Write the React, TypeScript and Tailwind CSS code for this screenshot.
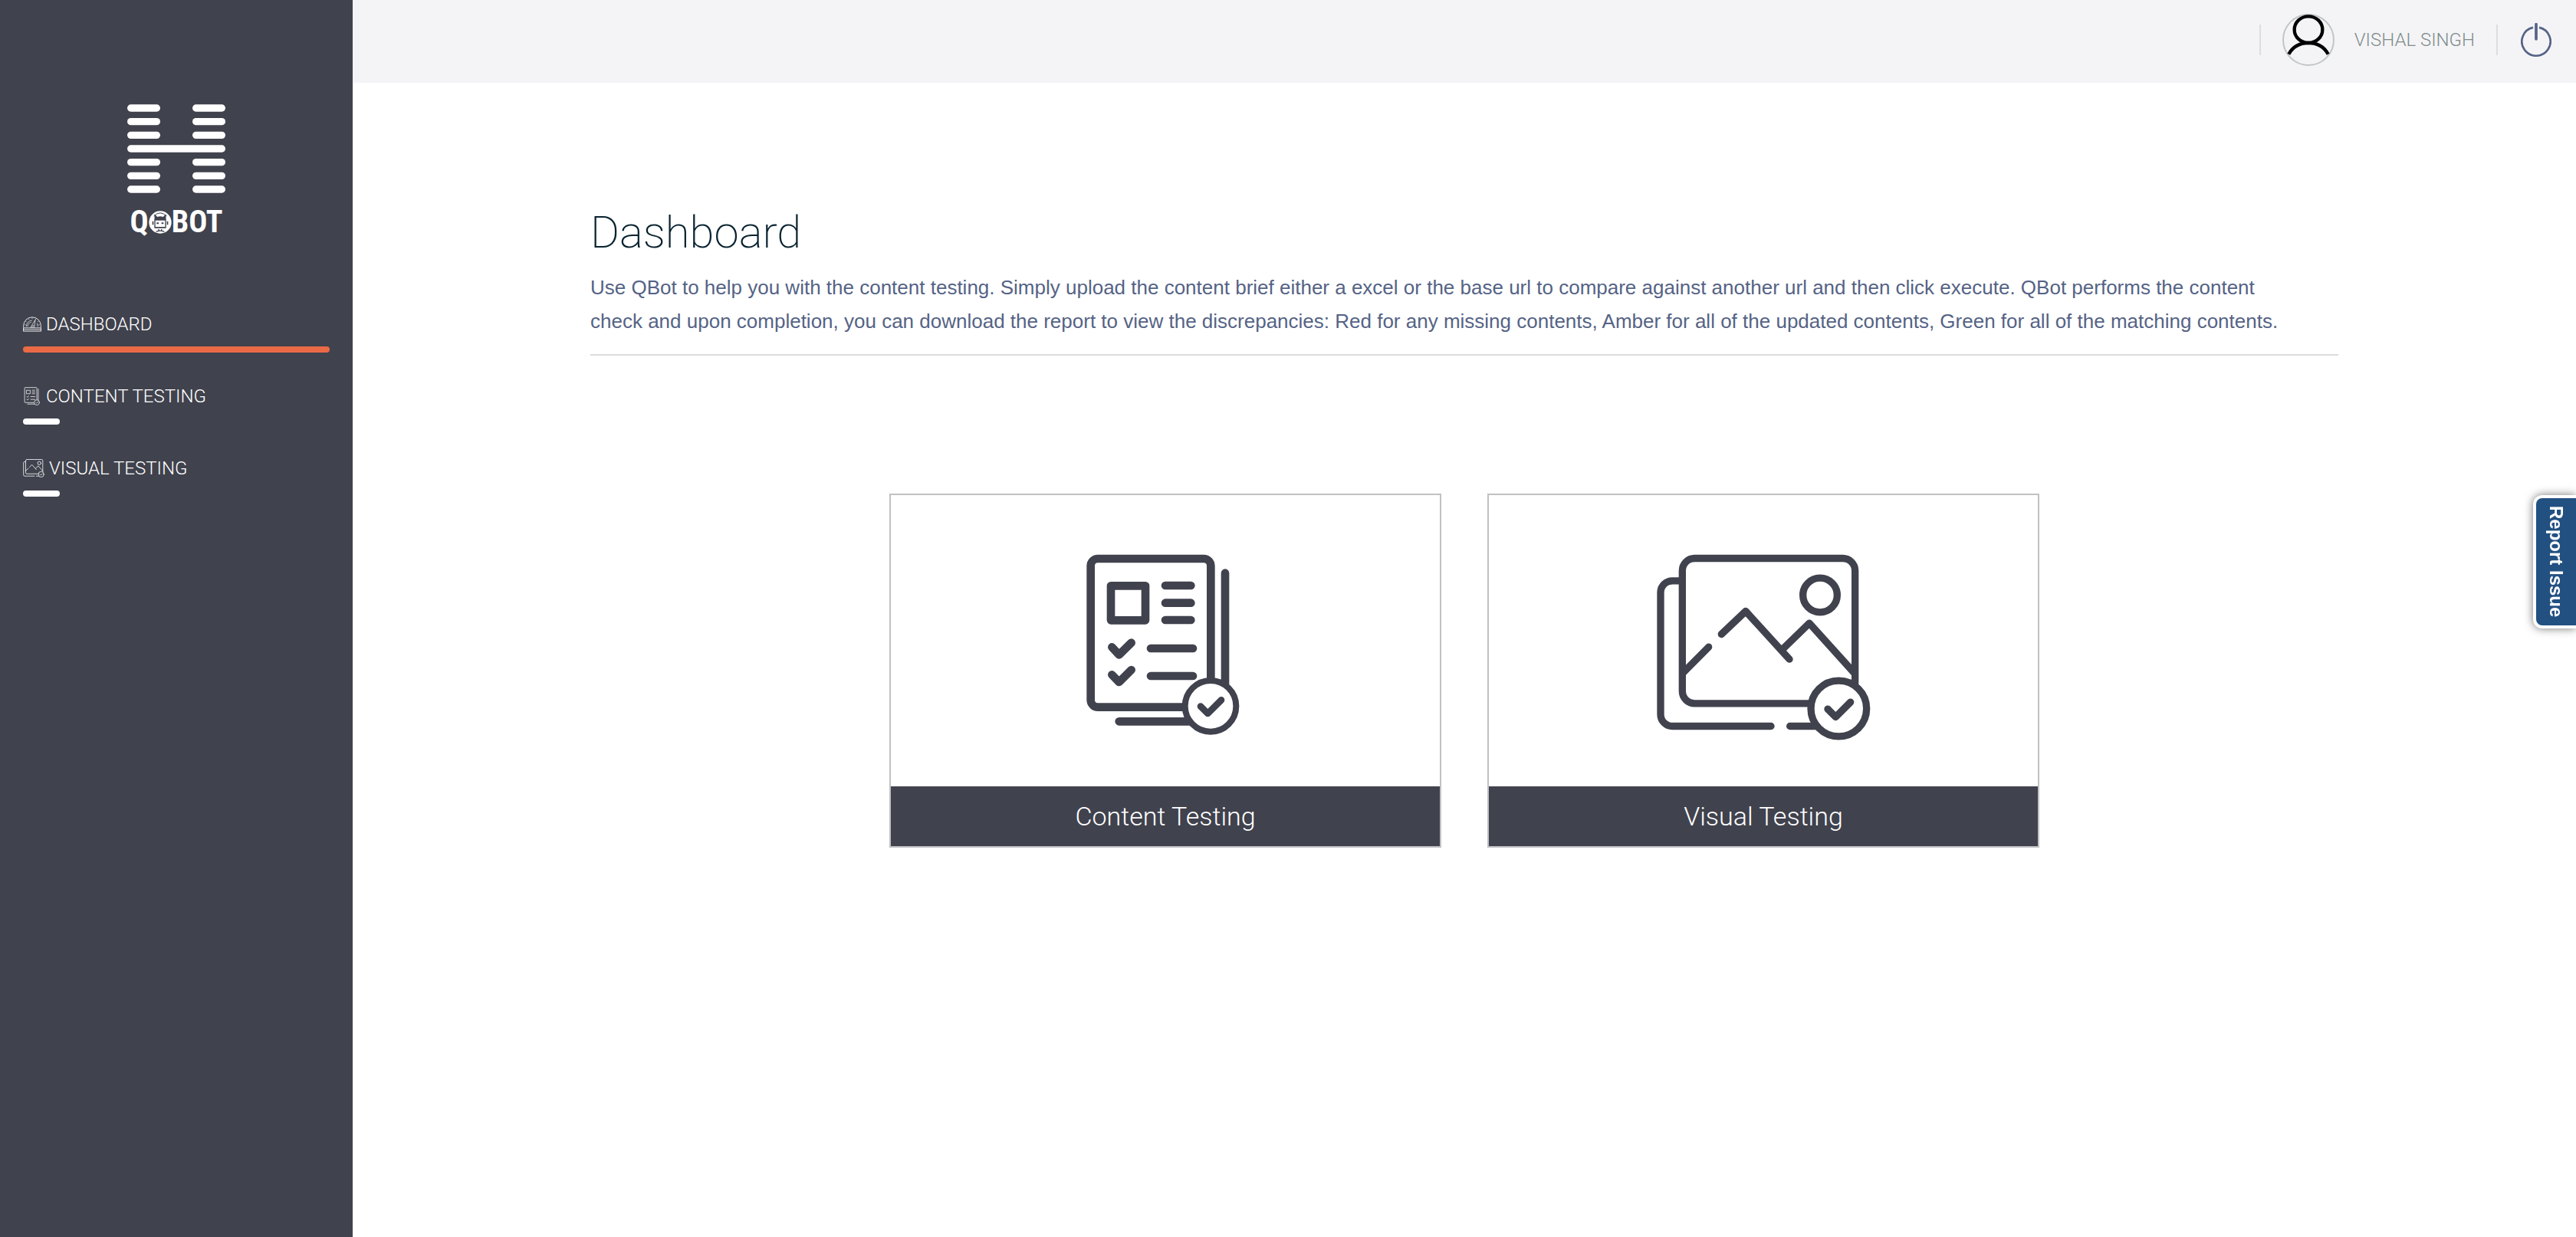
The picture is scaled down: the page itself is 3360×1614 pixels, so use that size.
import React from "react";

const INK = "#40424d";

function ContentIcon({ className, thin = false }: { className: string; thin?: boolean }) {
  const w = thin ? 22 : 32;
  return (
    <svg className={className} viewBox="112 98 618 708" fill="none" stroke="currentColor" strokeLinecap="round" strokeLinejoin="round" strokeWidth={w} aria-hidden="true">
      <path d="M490 697H157a28 28 0 0 1-28-28V144a28 28 0 0 1 28-28h414a28 28 0 0 1 28 28v440" />
      <path d="M655 172V620M240 753H530" />
      <path d="M208 222h135v135H208z" />
      <path d="M421 221h100M421 289h100M421 356h100M364 467h165M364 575h165" />
      <path d="M212 462l28 30 48-47M212 570l28 29 48-48" />
      <circle cx="598" cy="693" r="100" strokeWidth={thin ? 20 : 24} fill={thin ? INK : "#fff"} />
      <path d="M559 694l28 28 53-53" strokeWidth={thin ? 20 : 26} />
    </svg>
  );
}

function VisualIcon({ className, thin = false }: { className: string; thin?: boolean }) {
  return (
    <svg className={className} viewBox="92 98 837 728" fill="none" stroke="currentColor" strokeLinecap="round" strokeLinejoin="round" strokeWidth={thin ? 24 : 28} aria-hidden="true">
      <path d="M190 202H153a46 46 0 0 0-46 46V725a46 46 0 0 0 46 46H539M613 771H720" />
      <path d="M690 682H240a48 48 0 0 1-48-48V162a48 48 0 0 1 48-48H820a48 48 0 0 1 48 48V610" />
      <circle cx="731" cy="258" r="67" />
      <path d="M345 411L440 321 611 509M585 469L689 368 866 564M196 561L295 461" />
      <circle cx="804" cy="702" r="109" fill={thin ? INK : "#fff"} />
      <path d="M761 704l31 31 58-58" />
    </svg>
  );
}

function GaugeIcon({ className }: { className: string }) {
  return (
    <svg className={className} viewBox="90 65 72 59" fill="none" stroke="currentColor" strokeWidth="2.500" strokeLinejoin="round" aria-hidden="true">
      <path d="M92 108V101a34 34 0 0 1 68 0V108" />
      <path d="M91.500 109h69v13h-69zM92 115.500h68" />
      <path d="M103 104a23 23 0 0 1 22-24M108 104a18 18 0 0 1 14-17" strokeWidth="2" />
      <path d="M120 106L138 77 134 106zM126 100h8" strokeWidth="2" />
      <path d="M126 69v5M112 73l2 4M101 83l3 3M97 97h4M141 72l-2 4M151 83l-4 3M155 97h-5M145 91l3 13" strokeWidth="2" />
    </svg>
  );
}

function Logo() {
  const rows = [0, 1, 2, 3, 4, 5, 6];
  return (
    <a href="#home" className="flex flex-col items-center text-white" aria-label="QBot home">
      <svg className="h-[116px] w-32" viewBox="78 48 384 348" fill="#fff" aria-hidden="true">
        {rows.map((r) =>
          r === 3 ? (
            <rect key={r} x="78" y="208" width="384" height="28" rx="14" />
          ) : (
            <g key={r}>
              <rect x="78" y={49 + r * 53} width="129" height="28" rx="14" />
              <rect x="333" y={49 + r * 53} width="129" height="28" rx="14" />
            </g>
          ),
        )}
      </svg>
      <span className="mt-[18px] flex h-10 items-center font-['Roboto_Condensed','Liberation_Sans_Narrow',sans-serif] text-[40px] leading-10 font-bold">
        Q
        <svg className="h-[30px] w-[30px]" viewBox="161 461 90 90" aria-hidden="true">
          <circle cx="206" cy="506" r="44" fill="#fff" />
          <path d="M184 492l-1-18 12 11q11-5 22 0l12-11-1 18z" fill={INK} />
          <path d="M183 491h46v38h-46zM175 502h5v14h-5zM232 502h5v14h-5z" fill={INK} />
          <path d="M187 499h38v25h-38z" fill="#fff" />
          <path d="M192 507h8v6h-8zM211 507h8v6h-8z" fill={INK} />
          <path d="M190 543q16-7 32 0M200 533v6M211 533v6" stroke={INK} strokeWidth="4" fill="none" />
          <path d="M181 482q25-25 50 0" stroke={INK} strokeWidth="3" fill="none" />
        </svg>
        BOT
      </span>
    </a>
  );
}

function NavItem({ label, icon, active = false }: { label: string; icon: React.ReactNode; active?: boolean }) {
  return (
    <li>
      <a href="#nav" aria-current={active ? "page" : undefined} className="block text-white">
        <span className="flex h-[30px] items-center gap-1.5 text-2xl font-light whitespace-nowrap">
          {icon}
          {label}
        </span>
        <span className={active ? "mt-[14px] block h-2 w-full rounded-full bg-[#eb6a46]" : "mt-[14px] block h-2 w-12 rounded-full bg-white"} />
      </a>
    </li>
  );
}

function Card({ label, icon }: { label: string; icon: React.ReactNode }) {
  return (
    <a href="#open" className="flex max-w-[720px] flex-1 flex-col border-2 border-[#c0c1c3] text-[#40424d]">
      <span className="flex h-[380px] justify-center pt-[77px]">{icon}</span>
      <span className="flex h-[78px] items-center justify-center bg-[#40424d] text-[34px] font-light text-white">{label}</span>
    </a>
  );
}

export default function App() {
  return (
    <div className="flex min-h-screen bg-white font-[Roboto,sans-serif]">
      <aside className="w-[460px] shrink-0 bg-[#40424d] px-[30px] pt-[136px]">
        <Logo />
        <nav className="mt-[98px]">
          <ul className="flex flex-col gap-[42px]">
            <NavItem active label="DASHBOARD" icon={<GaugeIcon className="h-5 w-6" />} />
            <NavItem label="CONTENT TESTING" icon={<ContentIcon thin className="h-6 w-6" />} />
            <NavItem label="VISUAL TESTING" icon={<VisualIcon thin className="h-6 w-7" />} />
          </ul>
        </nav>
      </aside>

      <div className="flex min-w-0 flex-1 flex-col">
        <header className="flex h-[108px] items-center justify-end bg-[#f4f4f7] pr-8 pb-1">
          <div className="flex h-10 items-center border-x-2 border-[#dcdde0] px-7">
            <svg className="h-[68px] w-[68px]" viewBox="180 60 204 204" fill="none" aria-hidden="true">
              <circle cx="282" cy="162" r="99" stroke="#c0c5c5" strokeWidth="6" />
              <ellipse cx="282" cy="122" rx="55" ry="52" stroke="#000" strokeWidth="13" />
              <path d="M205 218q24-44 77-44t77 44" stroke="#000" strokeWidth="13" />
            </svg>
            <span className="ml-[26px] text-2xl font-light whitespace-nowrap text-[#7f8c8a]">VISHAL SINGH</span>
          </div>
          <button type="button" aria-label="Log out" className="ml-[30px] cursor-pointer">
            <svg className="h-11 w-10" viewBox="1104 92 120 132" fill="none" stroke="#556385" aria-hidden="true">
              <path d="M1176 109.500a56 56 0 1 1-24 0" strokeWidth="8" />
              <path d="M1164 97V155" strokeWidth="11" strokeLinecap="round" />
            </svg>
          </button>
        </header>

        <main className="mx-auto w-full max-w-[2280px] pt-[158px]">
          <section className="border-b-2 border-[#dadbdc] pb-[21px]">
            <h1 className="text-[58px] leading-[75px] font-extralight text-[#08222f]">Dashboard</h1>
            <p className="mt-3 max-w-[2220px] font-['Liberation_Sans',Arial,sans-serif] text-[26px] leading-[44px] text-[#556385]">
              Use QBot to help you with the content testing. Simply upload the content brief either a excel or the base url to compare against another url and then click execute. QBot performs the content check and upon completion, you can download the report to view the discrepancies: Red for any missing contents, Amber for all of the updated contents, Green for all of the matching contents.
            </p>
          </section>
          <div className="mt-[180px] flex justify-center gap-[60px]">
            <Card label="Content Testing" icon={<ContentIcon className="h-[236px] w-[206px]" />} />
            <Card label="Visual Testing" icon={<VisualIcon className="h-[243px] w-[279px]" />} />
          </div>
        </main>
      </div>

      <button type="button" className="fixed top-[646px] right-0 flex h-[174px] w-14 cursor-pointer items-center justify-center rounded-l-xl border-4 border-r-0 border-white bg-[#225081] font-['Liberation_Sans',Arial,sans-serif] text-2xl font-bold text-white shadow-[0_0_12px_rgba(0,0,0,0.55)] [writing-mode:vertical-rl]">
        Report Issue
      </button>
    </div>
  );
}
